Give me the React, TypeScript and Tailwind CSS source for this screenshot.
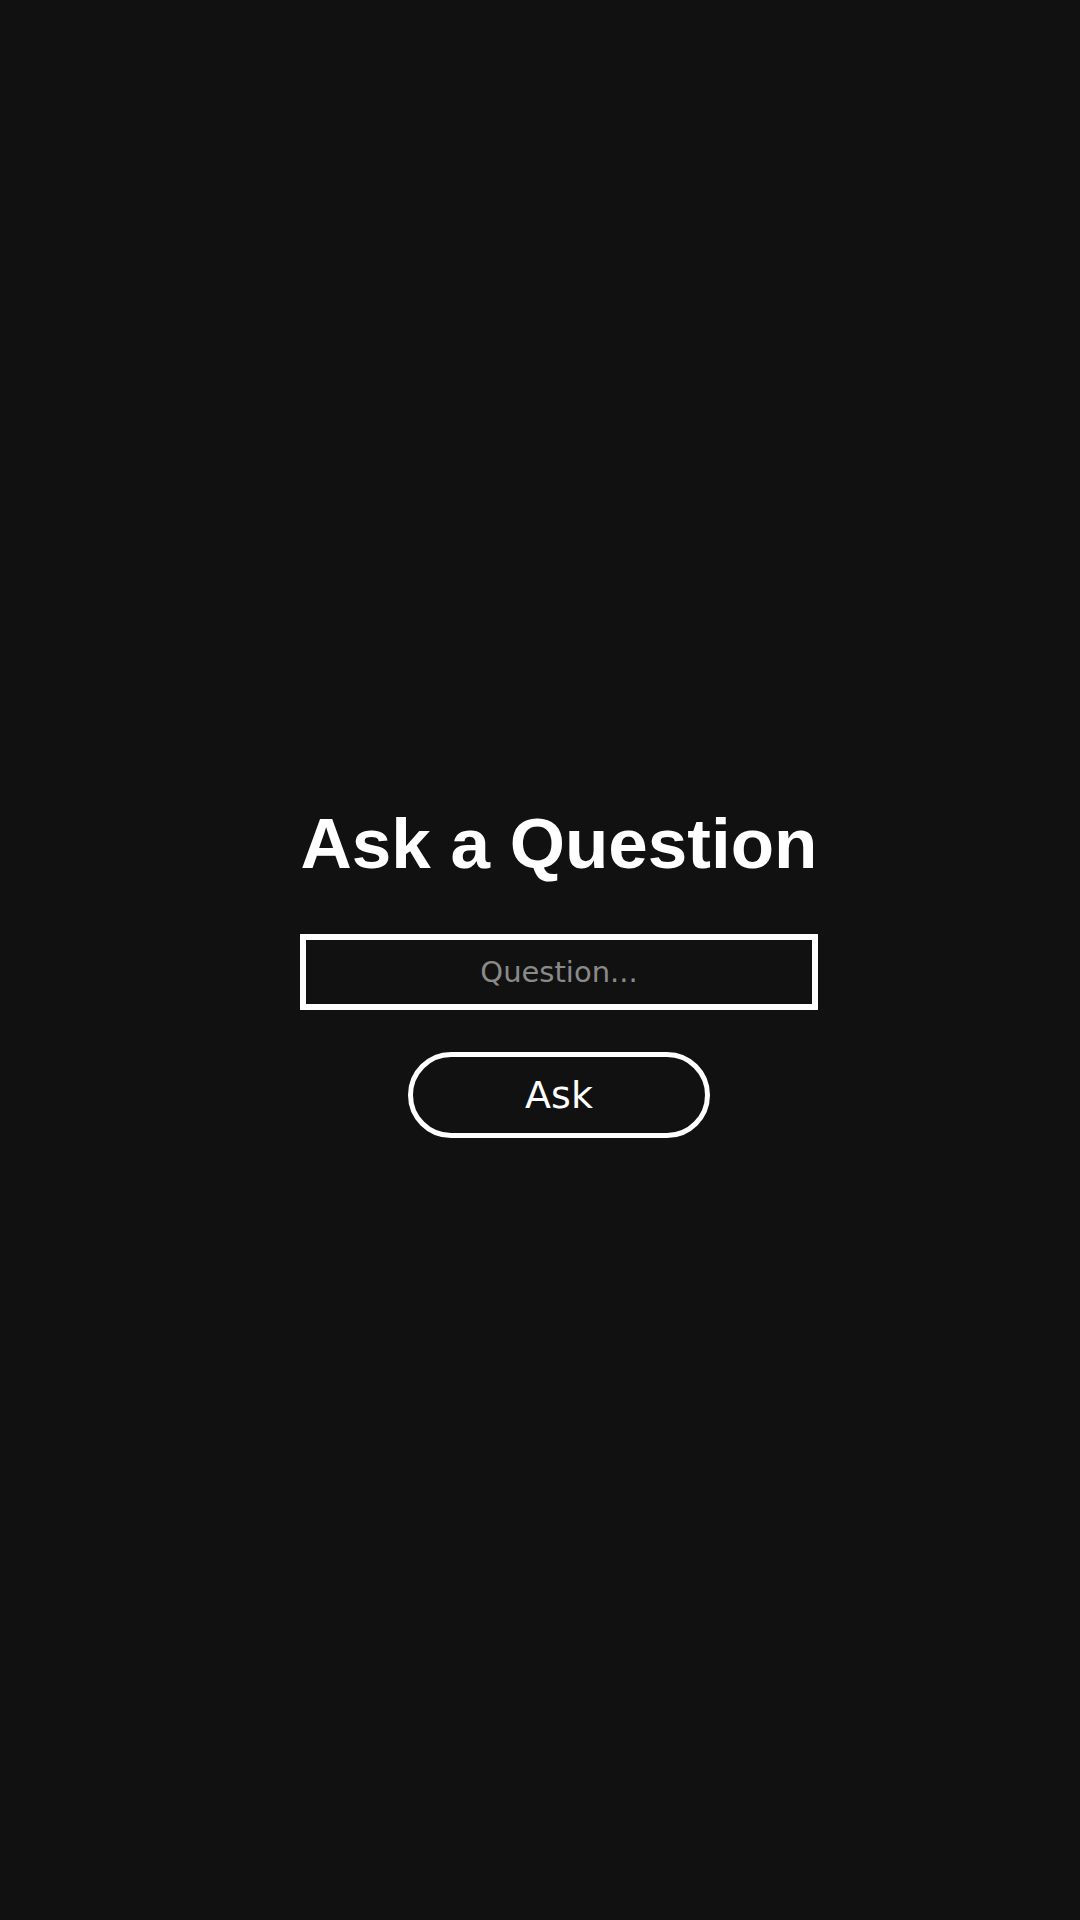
export default function App() {
  return (
    <div className="min-h-screen w-full bg-[#111111] flex flex-col items-center justify-center pt-[26px] pl-[38px]">
      <h1 className="font-['Liberation_Sans',Arial,sans-serif] text-[71px] leading-none font-bold text-white">
        Ask a Question
      </h1>
      <input
        type="text"
        placeholder="Question..."
        className="mt-[55px] box-border w-[518px] h-[76px] border-[6px] border-white bg-transparent text-center text-[29px] text-white placeholder:text-[#8a8a8a] font-['DejaVu_Sans',Verdana,sans-serif] outline-none"
      />
      <button className="mt-[42px] box-border w-[302px] h-[86px] rounded-full border-[5px] border-white bg-transparent text-[38px] leading-none text-white font-['DejaVu_Sans',Verdana,sans-serif]">
        Ask
      </button>
    </div>
  );
}
